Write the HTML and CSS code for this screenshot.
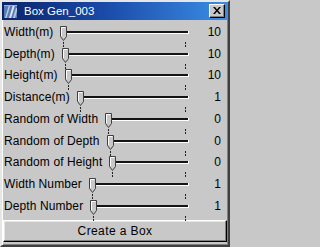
FILE: index.html
```html
<!DOCTYPE html>
<html>
<head>
<meta charset="utf-8">
<link rel="stylesheet" href="styles.css">
</head>
<body>
<div class="window">
  <div class="titlebar">
    <svg class="app-icon" width="13" height="13" viewBox="0 0 13 13">
      <rect x="0" y="0" width="13" height="13" fill="#5a7cb4"/>
      <polygon points="5,13 9,0 11,0 7,13" fill="#dfe8f4"/>
      <polygon points="1,13 5,0 6.5,0 2.5,13" fill="#b8c8e4"/>
      <polygon points="9,13 12,3 13,3 13,6 11,13" fill="#b8c8e4"/>
      <rect x="0" y="0" width="13" height="1" fill="#9db3d8"/>
    </svg>
    <span class="title">Box Gen_003</span>
    <span class="close"><svg width="8" height="7" viewBox="0 0 8 7"><path d="M0 0h2l2 2.5 2-2.5h2l-3 3.5 3 3.5h-2l-2-2.5-2 2.5h-2l3-3.5z" fill="#000"/></svg></span>
  </div>
  <div class="rows">
    <div class="row"><span class="label">Width(m)</span><div class="slider"><div class="track"></div><svg class="thumb" width="7" height="15" viewBox="0 0 7 15"><polygon points="0.5,0.5 6.5,0.5 6.5,10.5 3.5,14.5 0.5,10.5" fill="#c8c8c8" stroke="#404040" stroke-width="1"/><polyline points="1.5,10 1.5,1.5 5.5,1.5" fill="none" stroke="#fff" stroke-width="1"/></svg><i class="tick start"></i><i class="tick end"></i></div><span class="value">10</span></div>
    <div class="row"><span class="label">Depth(m)</span><div class="slider"><div class="track"></div><svg class="thumb" width="7" height="15" viewBox="0 0 7 15"><polygon points="0.5,0.5 6.5,0.5 6.5,10.5 3.5,14.5 0.5,10.5" fill="#c8c8c8" stroke="#404040" stroke-width="1"/><polyline points="1.5,10 1.5,1.5 5.5,1.5" fill="none" stroke="#fff" stroke-width="1"/></svg><i class="tick start"></i><i class="tick end"></i></div><span class="value">10</span></div>
    <div class="row"><span class="label">Height(m)</span><div class="slider"><div class="track"></div><svg class="thumb" width="7" height="15" viewBox="0 0 7 15"><polygon points="0.5,0.5 6.5,0.5 6.5,10.5 3.5,14.5 0.5,10.5" fill="#c8c8c8" stroke="#404040" stroke-width="1"/><polyline points="1.5,10 1.5,1.5 5.5,1.5" fill="none" stroke="#fff" stroke-width="1"/></svg><i class="tick start"></i><i class="tick end"></i></div><span class="value">10</span></div>
    <div class="row"><span class="label">Distance(m)</span><div class="slider"><div class="track"></div><svg class="thumb" width="7" height="15" viewBox="0 0 7 15"><polygon points="0.5,0.5 6.5,0.5 6.5,10.5 3.5,14.5 0.5,10.5" fill="#c8c8c8" stroke="#404040" stroke-width="1"/><polyline points="1.5,10 1.5,1.5 5.5,1.5" fill="none" stroke="#fff" stroke-width="1"/></svg><i class="tick start"></i><i class="tick end"></i></div><span class="value">1</span></div>
    <div class="row"><span class="label">Random of Width</span><div class="slider"><div class="track"></div><svg class="thumb" width="7" height="15" viewBox="0 0 7 15"><polygon points="0.5,0.5 6.5,0.5 6.5,10.5 3.5,14.5 0.5,10.5" fill="#c8c8c8" stroke="#404040" stroke-width="1"/><polyline points="1.5,10 1.5,1.5 5.5,1.5" fill="none" stroke="#fff" stroke-width="1"/></svg><i class="tick start"></i><i class="tick end"></i></div><span class="value">0</span></div>
    <div class="row"><span class="label">Random of Depth</span><div class="slider"><div class="track"></div><svg class="thumb" width="7" height="15" viewBox="0 0 7 15"><polygon points="0.5,0.5 6.5,0.5 6.5,10.5 3.5,14.5 0.5,10.5" fill="#c8c8c8" stroke="#404040" stroke-width="1"/><polyline points="1.5,10 1.5,1.5 5.5,1.5" fill="none" stroke="#fff" stroke-width="1"/></svg><i class="tick start"></i><i class="tick end"></i></div><span class="value">0</span></div>
    <div class="row"><span class="label">Random of Height</span><div class="slider"><div class="track"></div><svg class="thumb" width="7" height="15" viewBox="0 0 7 15"><polygon points="0.5,0.5 6.5,0.5 6.5,10.5 3.5,14.5 0.5,10.5" fill="#c8c8c8" stroke="#404040" stroke-width="1"/><polyline points="1.5,10 1.5,1.5 5.5,1.5" fill="none" stroke="#fff" stroke-width="1"/></svg><i class="tick start"></i><i class="tick end"></i></div><span class="value">0</span></div>
    <div class="row"><span class="label">Width Number</span><div class="slider"><div class="track"></div><svg class="thumb" width="7" height="15" viewBox="0 0 7 15"><polygon points="0.5,0.5 6.5,0.5 6.5,10.5 3.5,14.5 0.5,10.5" fill="#c8c8c8" stroke="#404040" stroke-width="1"/><polyline points="1.5,10 1.5,1.5 5.5,1.5" fill="none" stroke="#fff" stroke-width="1"/></svg><i class="tick start"></i><i class="tick end"></i></div><span class="value">1</span></div>
    <div class="row"><span class="label">Depth Number</span><div class="slider"><div class="track"></div><svg class="thumb" width="7" height="15" viewBox="0 0 7 15"><polygon points="0.5,0.5 6.5,0.5 6.5,10.5 3.5,14.5 0.5,10.5" fill="#c8c8c8" stroke="#404040" stroke-width="1"/><polyline points="1.5,10 1.5,1.5 5.5,1.5" fill="none" stroke="#fff" stroke-width="1"/></svg><i class="tick start"></i><i class="tick end"></i></div><span class="value">1</span></div>
  </div>
  <button class="create">Create a Box</button>
</div>
</body>
</html>
```

FILE: styles.css
```css
html, body {
  margin: 0;
  padding: 0;
  background: #c8c8c8;
}

.window {
  box-sizing: border-box;
  width: 230px;
  height: 247px;
  background: #c8c8c8;
  border-style: solid;
  border-width: 2px;
  border-color: #e6e6e6 #404040 #404040 #e6e6e6;
  box-shadow: inset 1px 1px 0 #ffffff, inset -1px -1px 0 #808080;
  display: flex;
  flex-direction: column;
  font-family: "Liberation Sans", Arial, sans-serif;
  font-size: 12px;
  color: #000;
}

.titlebar {
  height: 18px;
  margin: 0;
  background: linear-gradient(to right, #0a246a 0%, #1a4aa8 45%, #3a8ee6 100%);
  display: flex;
  align-items: center;
  padding-left: 2px;
  padding-right: 2px;
}

.app-icon {
  display: block;
  flex: none;
}

.title {
  color: #ffffff;
  font-size: 11.5px;
  margin-left: 7px;
  flex: 1;
  white-space: nowrap;
}

.close {
  box-sizing: border-box;
  width: 16px;
  height: 14px;
  background: #c8c8c8;
  border-style: solid;
  border-width: 1px;
  border-color: #ffffff #000000 #000000 #ffffff;
  box-shadow: inset -1px -1px 0 #808080;
  display: flex;
  align-items: center;
  justify-content: center;
  margin-right: 1px;
}

.close svg {
  display: block;
  margin-right: 1px;
  margin-bottom: 1px;
}

.rows {
  margin-top: 1px;
  display: flex;
  flex-direction: column;
}

.row {
  height: 21.75px;
  display: grid;
  grid-template-columns: auto 1fr 33px;
  align-items: center;
  padding-left: 2px;
  padding-right: 7px;
}

.label {
  white-space: nowrap;
  letter-spacing: 0.1px;
}

.value {
  text-align: right;
}

.slider {
  position: relative;
  height: 100%;
  margin-left: 7px;
}

.track {
  position: absolute;
  left: 3px;
  right: 0;
  top: calc(50% - 1px);
  height: 2px;
  background: #141414;
  box-shadow: 0 1px 0 #ffffff, 1px 0 0 #ffffff, 1px 1px 0 #ffffff;
}

.thumb {
  position: absolute;
  left: 0;
  top: calc(50% - 6px);
  display: block;
}

.tick {
  position: absolute;
  width: 1px;
  height: 5px;
  top: calc(50% + 10px);
  background: repeating-linear-gradient(to bottom, #202020 0 2px, transparent 2px 3px);
}

.tick.start {
  left: 3px;
}

.tick.end {
  right: 2px;
}

.create {
  margin: 3px 1px 0 1px;
  height: 22px;
  box-sizing: border-box;
  background: #c8c8c8;
  border-style: solid;
  border-width: 1px;
  border-color: #ffffff #000000 #000000 #ffffff;
  box-shadow: inset -1px -1px 0 #808080, inset 1px 1px 0 #e6e6e6;
  font-family: "Liberation Sans", Arial, sans-serif;
  font-size: 12px;
  letter-spacing: 0.4px;
  color: #000;
  padding: 0;
}
```
